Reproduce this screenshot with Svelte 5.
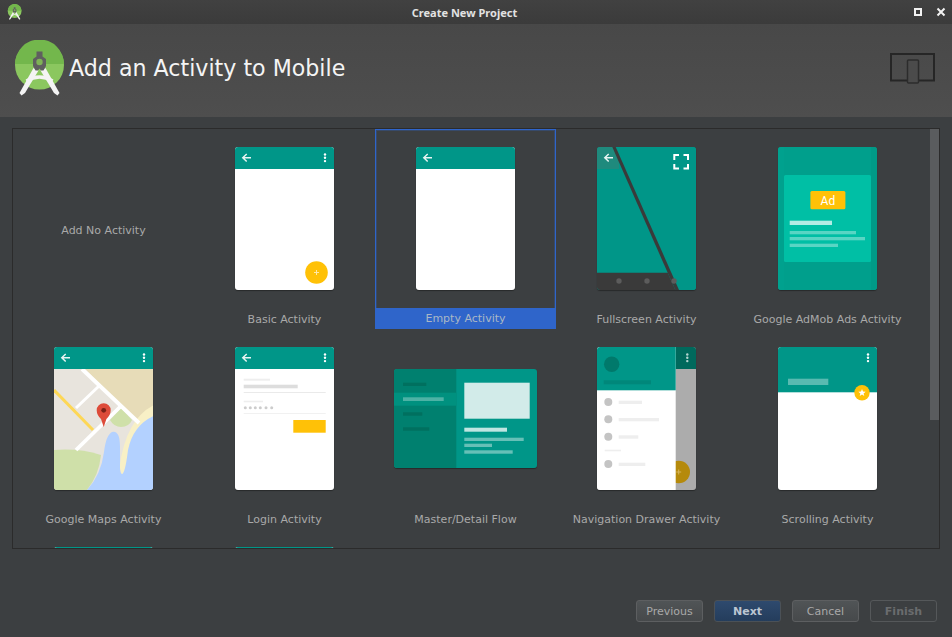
<script>
  const activities = [
    { name: 'Add No Activity', thumb: null },
    { name: 'Basic Activity', thumb: basic },
    { name: 'Empty Activity', thumb: empty, selected: true },
    { name: 'Fullscreen Activity', thumb: fullscreen },
    { name: 'Google AdMob Ads Activity', thumb: admob },
    { name: 'Google Maps Activity', thumb: maps },
    { name: 'Login Activity', thumb: login },
    { name: 'Master/Detail Flow', thumb: masterDetail },
    { name: 'Navigation Drawer Activity', thumb: drawer },
    { name: 'Scrolling Activity', thumb: scrolling },
    // next row only peeks in above the panel's bottom edge
    { name: '', thumb: empty },
    { name: '', thumb: empty }
  ];

  const buttons = [
    { label: 'Previous', cls: '' },
    { label: 'Next', cls: 'primary' },
    { label: 'Cancel', cls: '' },
    { label: 'Finish', cls: 'disabled' }
  ];
</script>

{#snippet logo(size)}
  <svg class="logo" width={size} height={size} viewBox="0 0 60 60">
    <circle cx="30.500" cy="25" r="24.500" fill="#8bc75f" />
    <path d="M6 24a24.500 24.500 0 0 1 49 0z" fill="#73b74c" />
    <path d="M17.500 41Q30.500 33 43.500 41" stroke="#f4f4f4" stroke-width="3.500" fill="none" />
    <path d="M24.500 28L29.500 30.500L16 53L12.500 55.500L10.500 53z" fill="#f4f4f4" />
    <path d="M36.500 28L31.500 30.500L45 53L48.500 55.500L50.500 53z" fill="#f4f4f4" />
    <path d="M27.500 11.500h6v5l3.500 2.500v7l-2.500 4.500h-2.500l-1.500 -2l-1.500 2h-2.500l-2.500 -4.500v-7l3.500 -2.500z" fill="#5f5f5f" />
    <circle cx="30.500" cy="22" r="3.200" fill="#7fb356" />
  </svg>
{/snippet}

{#snippet back()}
  <path d="M16 10.700H8.500M11.700 7L7.800 10.700L11.700 14.500" stroke="#e6f4f2" stroke-width="1.500" fill="none" />
{/snippet}

{#snippet dots(x = 90, fill = '#ffffff')}
  <circle cx={x} cy="7.500" r="1.200" {fill} />
  <circle cx={x} cy="10.800" r="1.200" {fill} />
  <circle cx={x} cy="14.100" r="1.200" {fill} />
{/snippet}

{#snippet basic()}
  <svg width="99" height="143" viewBox="0 0 99 143">
    <rect width="99" height="143" fill="#ffffff" />
    <rect width="99" height="22" fill="#009688" />
    {@render back()}
    {@render dots()}
    <circle cx="81.500" cy="125.500" r="11.300" fill="#ffc107" />
    <path d="M81.500 123v5M79 125.500h5" stroke="#ffe9a8" stroke-width="1" />
  </svg>
{/snippet}

{#snippet empty()}
  <svg width="99" height="143" viewBox="0 0 99 143">
    <rect width="99" height="143" fill="#ffffff" />
    <rect width="99" height="22" fill="#009688" />
    {@render back()}
  </svg>
{/snippet}

{#snippet fullscreen()}
  <svg width="99" height="143" viewBox="0 0 99 143">
    <rect width="99" height="143" fill="#009688" />
    <path d="M0 0H22V22H0z" fill="#1f8a7d" />
    <path d="M17 0H99V143H82z" fill="#009688" />
    <path d="M0 125.700H70.700L78.300 143H0z" fill="#3a3a3a" />
    <path d="M15.300 0H18.700L82 143H78.300z" fill="#3a3a3a" />
    <circle cx="22" cy="134" r="2.700" fill="#5c5c5c" />
    <circle cx="50" cy="134" r="2.700" fill="#5c5c5c" />
    <circle cx="77" cy="134" r="2.700" fill="#5c5c5c" />
    {@render back()}
    <path d="M77.300 13V8H82M86.500 8H91V13M91 17V21.500H86.500M82 21.500H77.300V17" stroke="#ffffff" stroke-width="2" fill="none" />
  </svg>
{/snippet}

{#snippet admob()}
  <svg width="99" height="143" viewBox="0 0 99 143">
    <rect width="99" height="143" fill="#009f8c" />
    <rect width="6" height="143" fill="#00a18e" />
    <rect x="93" width="6" height="143" fill="#009a87" />
    <rect x="6" y="28" width="87" height="87" rx="1.500" fill="#00bfa5" />
    <rect x="32.400" y="44" width="35" height="18.300" rx="1.500" fill="#ffc107" />
    <text x="49.900" y="57.500" class="ad">Ad</text>
    <rect x="11.700" y="73.700" width="42.300" height="4.300" fill="#ffffff" opacity="0.7" />
    <rect x="11.700" y="84" width="66.300" height="3.300" fill="#ffffff" opacity="0.35" />
    <rect x="11.700" y="90" width="75.300" height="3.300" fill="#ffffff" opacity="0.35" />
    <rect x="11.700" y="96.700" width="48.300" height="3.300" fill="#ffffff" opacity="0.35" />
  </svg>
{/snippet}

{#snippet maps()}
  <svg width="99" height="143" viewBox="0 0 99 143">
    <rect width="99" height="143" fill="#e8e4dd" />
    <path d="M31 22H100V58L85 75z" fill="#e7dcb8" />
    <path d="M67 61L78 73Q75 80 67 80Q60 80 56 73z" fill="#cfe0a9" />
    <path d="M0 103Q25 101 47 108Q45 128 33 143H0z" fill="#cfe0a9" />
    <path d="M100 58Q72 72 65.500 120L68 128L100 70z" fill="#f8f0c6" />
    <path d="M33 143Q47 128 50 105Q52 88 58 85Q66 83 66 100V120Q66 127 68 127Q71 127 74 103Q79 78 100 68.700V143z" fill="#b3d1ff" />
    <path d="M28 22L85 76" stroke="#ffffff" stroke-width="3.800" />
    <path d="M22 103L67 59" stroke="#ffffff" stroke-width="3.800" />
    <path d="M22 61L45 39" stroke="#ffffff" stroke-width="3" />
    <path d="M0 43L39 83" stroke="#fdd756" stroke-width="3" />
    <path d="M49.700 80L47 72Q42.700 68 42.700 63.300A7 7 0 0 1 56.700 63.300Q56.700 68 52.400 72z" fill="#dd4b39" />
    <circle cx="49.700" cy="63.300" r="2.400" fill="#7a2117" />
    <rect width="99" height="22" fill="#009688" />
    {@render back()}
    {@render dots()}
  </svg>
{/snippet}

{#snippet login()}
  <svg width="99" height="143" viewBox="0 0 99 143">
    <rect width="99" height="143" fill="#ffffff" />
    <rect width="99" height="22" fill="#009688" />
    {@render back()}
    {@render dots()}
    <rect x="8.700" y="31.700" width="26.300" height="2" fill="#eeeeee" />
    <rect x="8.700" y="37.700" width="54" height="3.600" fill="#dddddd" />
    <rect x="8.700" y="45" width="82" height="0.800" fill="#e5e5e5" />
    <rect x="8.700" y="53.700" width="19.300" height="1.600" fill="#eeeeee" />
    {#each [10.300, 15.300, 20.300, 25.300, 31, 36.700] as x}
      <circle cx={x} cy="60.700" r="1.500" fill="#cccccc" />
    {/each}
    <rect x="8.700" y="66" width="82" height="0.800" fill="#eeeeee" />
    <rect x="58.300" y="73" width="32.400" height="12.700" fill="#ffc107" />
  </svg>
{/snippet}

{#snippet masterDetail()}
  <svg width="143" height="99" viewBox="0 0 143 99">
    <rect width="143" height="99" fill="#009688" />
    <rect width="62.300" height="99" fill="#00806f" />
    <rect y="23.700" width="62.300" height="13" fill="#00917f" />
    <rect x="9" y="13.700" width="23.300" height="3.300" fill="#00705f" />
    <rect x="9" y="28.300" width="40.700" height="3.700" fill="#ffffff" opacity="0.3" />
    <rect x="9" y="43.300" width="19.300" height="3.400" fill="#00705f" />
    <rect x="9" y="58.300" width="26.300" height="3.400" fill="#00705f" />
    <rect x="70.300" y="13.700" width="65.400" height="36" fill="#d2ebe9" />
    <rect x="70.300" y="58.700" width="42.700" height="4" fill="#ffffff" opacity="0.75" />
    <rect x="70.300" y="68.700" width="59.400" height="3.300" fill="#ffffff" opacity="0.4" />
    <rect x="70.300" y="74.700" width="27.700" height="3.300" fill="#ffffff" opacity="0.4" />
    <rect x="70.300" y="81.300" width="48.400" height="3.400" fill="#ffffff" opacity="0.4" />
  </svg>
{/snippet}

{#snippet drawer()}
  <svg width="99" height="143" viewBox="0 0 99 143">
    <rect width="99" height="143" fill="#acacac" />
    <rect x="78" width="21" height="22" fill="#00695c" />
    {@render dots(90.300, '#b5d5d0')}
    <circle cx="81.700" cy="125" r="11.300" fill="#b58a0c" />
    <path d="M81.700 122.500v5M79.200 125h5" stroke="#d4b35a" stroke-width="1" />
    <rect width="78.700" height="143" fill="#ffffff" />
    <rect width="78.700" height="43.300" fill="#009688" />
    <circle cx="14.700" cy="17.300" r="7.700" fill="#00796b" />
    <rect x="6.700" y="33.300" width="47.300" height="4" fill="#00877a" />
    {#each [55, 72.300, 89.700, 117] as y}
      <circle cx="11.300" cy={y} r="4" fill="#c4c4c4" />
    {/each}
    <rect x="21.700" y="53.700" width="23.300" height="3.300" fill="#eeeeee" />
    <rect x="21.700" y="71" width="40.300" height="3.300" fill="#eeeeee" />
    <rect x="21.700" y="88.300" width="19.600" height="3.400" fill="#eeeeee" />
    <rect x="7.700" y="102.700" width="16.300" height="1.600" fill="#eeeeee" />
    <rect x="21.700" y="115.700" width="26.600" height="3.300" fill="#eeeeee" />
  </svg>
{/snippet}

{#snippet scrolling()}
  <svg width="99" height="143" viewBox="0 0 99 143">
    <rect width="99" height="143" fill="#ffffff" />
    <rect width="99" height="45.300" fill="#009688" />
    {@render dots()}
    <rect x="10" y="31.700" width="40.300" height="6.300" fill="#ffffff" opacity="0.35" />
    <circle cx="84" cy="45.700" r="7.700" fill="#ffc107" />
    <path d="M84 42L85 44.600L87.700 44.700L85.600 46.400L86.300 49L84 47.500L81.700 49L82.400 46.400L80.300 44.700L83 44.600z" fill="#ffffff" />
  </svg>
{/snippet}

<div class="dialog">
  <div class="titlebar">
    <span class="app-icon">{@render logo(17)}</span>
    <span class="window-title">Create New Project</span>
    <div class="window-controls">
      <span class="maximize"></span>
      <svg width="10" height="10" viewBox="0 0 10 10">
        <path d="M1.500 1.500L8.500 8.500M8.500 1.500L1.500 8.500" stroke="#f2f2f2" stroke-width="2" />
      </svg>
    </div>
  </div>

  <header class="banner">
    {@render logo(60)}
    <h1>Add an Activity to Mobile</h1>
    <svg class="devices" width="47" height="32" viewBox="0 0 47 32">
      <rect x="1" y="1" width="43" height="26.500" fill="none" stroke="#262626" stroke-width="2" />
      <rect x="17.500" y="7" width="11" height="23" rx="1" fill="#4b4b4b" stroke="#2c2c2c" stroke-width="1.500" />
    </svg>
  </header>

  <main class="gallery">
    <div class="grid">
      {#each activities as item}
        <div class="cell" class:selected={item.selected}>
          {#if item.thumb}
            <div class="thumb-area">
              <div class="thumb">{@render item.thumb()}</div>
            </div>
            <div class="label">{item.name}</div>
          {:else}
            <div class="no-activity">{item.name}</div>
          {/if}
        </div>
      {/each}
    </div>
    <div class="scrollbar"></div>
  </main>

  <footer class="actions">
    {#each buttons as btn}
      <button class={btn.cls}>{btn.label}</button>
    {/each}
  </footer>
</div>

<style>
  :global(body) {
    margin: 0;
    background: #3c3f41;
  }

  .dialog {
    width: 952px;
    height: 637px;
    display: flex;
    flex-direction: column;
    overflow: hidden;
    background: #3c3f41;
    font-family: "DejaVu Sans", sans-serif;
  }

  .titlebar {
    height: 24px;
    flex: none;
    display: flex;
    align-items: center;
    justify-content: center;
    position: relative;
    background: linear-gradient(#414141, #3b3b3b);
  }

  .app-icon {
    position: absolute;
    left: 6px;
    top: 4px;
    display: flex;
  }

  .window-title {
    font-family: "Noto Sans", sans-serif;
    font-size: 11px;
    font-weight: 700;
    color: #e2e2e2;
    margin-right: 23px;
  }

  .window-controls {
    position: absolute;
    right: 6px;
    top: 7px;
    display: flex;
    align-items: center;
    gap: 14px;
  }

  .maximize {
    width: 4px;
    height: 4px;
    border: 2px solid #f2f2f2;
    background: #3c3c3c;
  }

  .banner {
    height: 93px;
    flex: none;
    display: flex;
    align-items: flex-start;
    padding: 16px 15px 0 9px;
    box-sizing: border-box;
    background: linear-gradient(#484848, #4e4e4e);
  }

  .logo {
    flex: none;
    display: block;
  }

  h1 {
    margin: 13px 0 0;
    font-size: 22.150px;
    font-weight: 400;
    line-height: 30px;
    color: #f4f4f4;
    flex: 1;
  }

  .devices {
    margin-top: 13px;
  }

  .gallery {
    flex: none;
    position: relative;
    width: 928px;
    height: 421px;
    margin: 11px 0 0 12px;
    box-sizing: border-box;
    border: 1px solid #2b2b2b;
    overflow: hidden;
  }

  .grid {
    display: grid;
    grid-template-columns: repeat(5, 181px);
    grid-auto-rows: 200px;
  }

  .cell {
    display: flex;
    flex-direction: column;
    box-sizing: border-box;
    border: 1px solid transparent;
  }

  .cell.selected {
    border-color: #2f65ca;
    box-shadow: inset 0 0 0 1px rgba(47, 101, 202, 0.3);
  }

  .thumb-area {
    flex: 1;
    display: flex;
    align-items: center;
    justify-content: center;
    padding-bottom: 1px;
  }

  .thumb {
    display: flex;
    border-radius: 3px;
    overflow: hidden;
    box-shadow: 0 1px 1px rgba(0, 0, 0, 0.35);
  }

  .label,
  .no-activity {
    font-size: 11px;
    color: #a9a9a9;
    text-align: center;
    white-space: nowrap;
  }

  .label {
    height: 21px;
    margin-bottom: -1px;
    line-height: 24px;
  }

  .no-activity {
    margin: auto 0;
    padding-top: 3px;
  }

  .selected .label {
    background: #2f65ca;
    color: #a9b7c6;
    line-height: 22px;
  }

  .ad {
    font-family: "Roboto", "DejaVu Sans", sans-serif;
    font-size: 12px;
    font-weight: 400;
    fill: #ffffff;
    text-anchor: middle;
  }

  .scrollbar {
    position: absolute;
    top: 0;
    right: 0;
    width: 9px;
    height: 291px;
    background: #5a5c5e;
  }

  .actions {
    flex: 1;
    display: flex;
    justify-content: flex-end;
    align-items: flex-start;
    gap: 11px;
    padding: 51px 15px 0 0;
  }

  button {
    width: 67px;
    height: 22px;
    padding: 0;
    box-sizing: border-box;
    font-family: inherit;
    font-size: 11px;
    color: #a9a9a9;
    border: 1px solid #5d5f61;
    border-radius: 3px;
    background: linear-gradient(#505456, #46494b);
  }

  button.primary {
    font-weight: 700;
    color: #bcc6d2;
    border-color: #4b5157;
    background: linear-gradient(#2e4a6e, #243d5c);
  }

  button.disabled {
    font-weight: 700;
    color: #6a6c6e;
    border-color: #55585a;
    background: transparent;
  }
</style>
